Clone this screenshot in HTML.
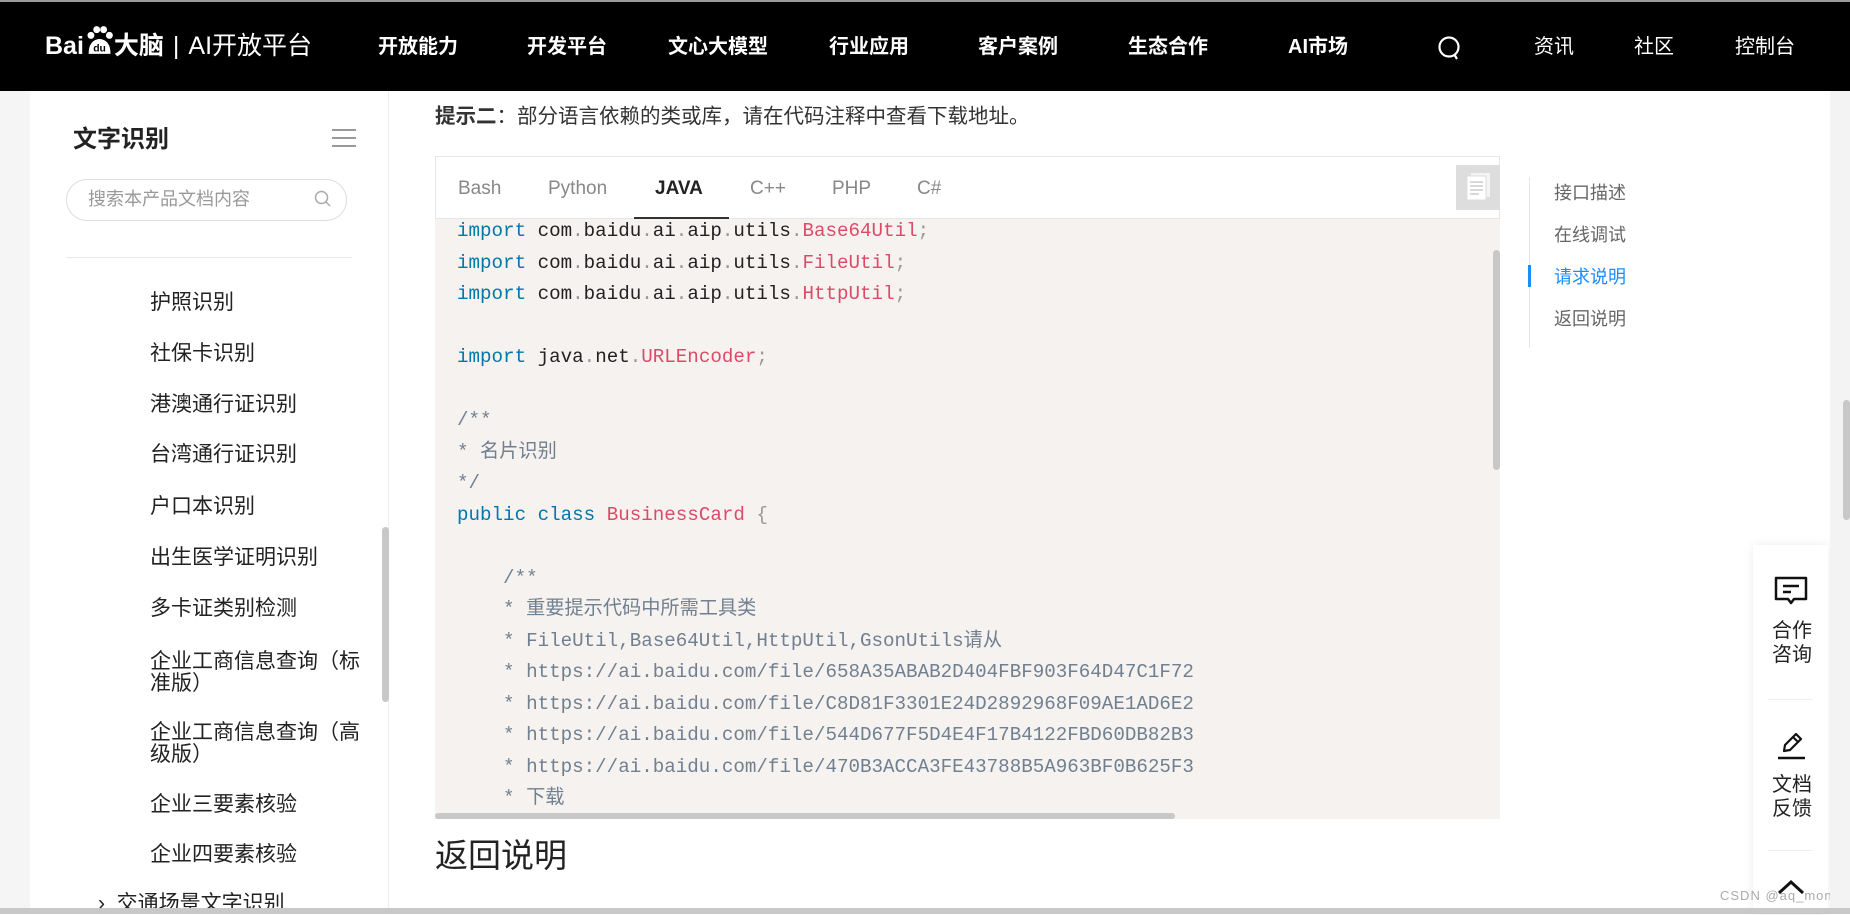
<!DOCTYPE html>
<html><head><meta charset="utf-8">
<style>
*{margin:0;padding:0;box-sizing:border-box}
body{width:1850px;height:914px;overflow:hidden;background:#fff;font-family:"Liberation Sans","Noto Sans CJK SC",sans-serif;position:relative;color:#333}
.abs{position:absolute}
#top{left:0;top:0;width:1850px;height:91px;background:#000;border-top:2px solid #9a9a9a}
.nav{position:absolute;top:32px;color:#fff;font-size:20px;font-weight:bold;white-space:nowrap;line-height:26px}
.navr{position:absolute;top:32px;color:#fff;font-size:20px;white-space:nowrap;line-height:26px}
#gut{left:0;top:91px;width:30px;height:823px;background:#f5f5f5}
#side{left:30px;top:91px;width:359px;height:823px;background:#fff;border-right:1px solid #eee}
.mi{position:absolute;left:150px;font-size:21px;color:#222;line-height:22px;width:215px;white-space:normal}
.code{font-family:"Liberation Mono","Noto Sans CJK SC",monospace;font-size:19.2px;line-height:31.5px;white-space:pre;color:#222}
.k{color:#07a}.c{color:#dd4a68}.p{color:#999}.cm{color:#708090}
.toc{position:absolute;left:1554px;font-size:18px;color:#666;line-height:22px}
.fw{position:absolute;left:1771px;font-size:20px;color:#222;line-height:24px;width:42px;text-align:center}
</style></head><body>
<div id="top" class="abs">
  <div class="abs" style="left:45px;top:29px;color:#fff;font-size:25px;font-weight:bold;white-space:nowrap;line-height:30px">Bai<span style="display:inline-block;width:30px;position:relative;height:24px;vertical-align:-3px"><svg width="30" height="30" viewBox="0 0 26 26" style="position:absolute;left:0;top:-8px"><circle cx="6" cy="9" r="3" fill="#fff"/><circle cx="11" cy="4" r="3" fill="#fff"/><circle cx="17" cy="4" r="3" fill="#fff"/><circle cx="22" cy="9" r="3" fill="#fff"/><path d="M4 25 Q4 13 13.5 12 Q23 13 23 25 Z" fill="#fff"/><text x="13.5" y="23" font-size="9" fill="#000" text-anchor="middle" font-family="Liberation Sans" font-weight="bold">du</text></svg></span>大脑<span style="font-weight:normal;margin:0 9px">|</span><span style="font-weight:normal">AI开放平台</span></div>
  <div class="nav" style="left:378px">开放能力</div>
  <div class="nav" style="left:527px">开发平台</div>
  <div class="nav" style="left:668px">文心大模型</div>
  <div class="nav" style="left:829px">行业应用</div>
  <div class="nav" style="left:978px">客户案例</div>
  <div class="nav" style="left:1128px">生态合作</div>
  <div class="nav" style="left:1288px">AI市场</div>
  <svg class="abs" style="left:1437px;top:33px" width="26" height="26" viewBox="0 0 26 26"><circle cx="12" cy="12" r="9.5" stroke="#fff" stroke-width="2.2" fill="none"/><path d="M17 19 L20 24" stroke="#fff" stroke-width="2.2"/></svg>
  <div class="navr" style="left:1534px">资讯</div>
  <div class="navr" style="left:1634px">社区</div>
  <div class="navr" style="left:1735px">控制台</div>
</div>
<div id="gut" class="abs"></div>
<div id="side" class="abs">
  <div class="abs" style="left:43px;top:28px;font-size:24px;font-weight:bold;color:#222">文字识别</div>
  <div class="abs" style="left:302px;top:38px;width:24px;height:2px;background:#999"></div>
  <div class="abs" style="left:302px;top:46px;width:24px;height:2px;background:#999"></div>
  <div class="abs" style="left:302px;top:54px;width:24px;height:2px;background:#999"></div>
  <div class="abs" style="left:36px;top:88px;width:281px;height:42px;border:1px solid #ddd;border-radius:21px"></div>
  <div class="abs" style="left:58px;top:94px;font-size:18px;color:#999">搜索本产品文档内容</div>
  <svg class="abs" style="left:283px;top:98px" width="20" height="20" viewBox="0 0 20 20"><circle cx="8.5" cy="8.5" r="6" stroke="#aaa" stroke-width="1.5" fill="none"/><path d="M13 13 L17 17" stroke="#aaa" stroke-width="1.5"/></svg>
  <div class="abs" style="left:36px;top:166px;width:286px;height:1px;background:#e8e8e8"></div>
  <div class="abs" style="left:352px;top:436px;width:7px;height:175px;background:#c8c8c8;border-radius:4px"></div>
</div>
<div class="mi" style="top:292px">护照识别</div>
<div class="mi" style="top:343px">社保卡识别</div>
<div class="mi" style="top:394px">港澳通行证识别</div>
<div class="mi" style="top:444px">台湾通行证识别</div>
<div class="mi" style="top:496px">户口本识别</div>
<div class="mi" style="top:547px">出生医学证明识别</div>
<div class="mi" style="top:598px">多卡证类别检测</div>
<div class="mi" style="top:651px">企业工商信息查询（标准版）</div>
<div class="mi" style="top:722px">企业工商信息查询（高级版）</div>
<div class="mi" style="top:794px">企业三要素核验</div>
<div class="mi" style="top:844px">企业四要素核验</div>
<div class="mi" style="left:98px;top:893px;width:300px">›&nbsp; 交通场景文字识别</div>

<div class="abs" style="left:435px;top:99px;font-size:20.5px;color:#333;white-space:nowrap"><b>提示二</b>：部分语言依赖的类或库，请在代码注释中查看下载地址。</div>

<div class="abs" style="left:435px;top:156px;width:1065px;height:663px;overflow:hidden">
  <div class="abs" style="left:0;top:0;width:1065px;height:63px;border:1px solid #e6e6e6;background:#fff"></div>
  <div class="abs" style="left:23px;top:22px;font-size:19px;color:#888">Bash</div>
  <div class="abs" style="left:113px;top:22px;font-size:19px;color:#888">Python</div>
  <div class="abs" style="left:220px;top:22px;font-size:19px;color:#222;font-weight:bold">JAVA</div>
  <div class="abs" style="left:315px;top:22px;font-size:19px;color:#888">C++</div>
  <div class="abs" style="left:397px;top:22px;font-size:19px;color:#888">PHP</div>
  <div class="abs" style="left:482px;top:22px;font-size:19px;color:#888">C#</div>
  <div class="abs" style="left:199px;top:61px;width:95px;height:2px;background:#333"></div>
  <div class="abs" style="left:1021px;top:9px;width:44px;height:45px;background:#ddd"></div>
  <svg class="abs" style="left:1031px;top:16px" width="26" height="30" viewBox="0 0 26 30"><rect x="5" y="1" width="19" height="24" fill="#f4f4f4"/><rect x="1" y="4" width="19" height="24" fill="#fff" stroke="#ddd"/><path d="M4 10h13M4 14h13M4 18h13M4 22h9" stroke="#ccc" stroke-width="1.5"/></svg>
  <div class="abs" style="left:0;top:63px;width:1065px;height:600px;background:#f5f2f0;overflow:hidden">
<div class="code abs" style="left:22px;top:-3px"><span class="k">import</span> com<span class="p">.</span>baidu<span class="p">.</span>ai<span class="p">.</span>aip<span class="p">.</span>utils<span class="p">.</span><span class="c">Base64Util</span><span class="p">;</span>
<span class="k">import</span> com<span class="p">.</span>baidu<span class="p">.</span>ai<span class="p">.</span>aip<span class="p">.</span>utils<span class="p">.</span><span class="c">FileUtil</span><span class="p">;</span>
<span class="k">import</span> com<span class="p">.</span>baidu<span class="p">.</span>ai<span class="p">.</span>aip<span class="p">.</span>utils<span class="p">.</span><span class="c">HttpUtil</span><span class="p">;</span>

<span class="k">import</span> java<span class="p">.</span>net<span class="p">.</span><span class="c">URLEncoder</span><span class="p">;</span>

<span class="cm">/**
* 名片识别
*/</span>
<span class="k">public</span> <span class="k">class</span> <span class="c">BusinessCard</span> <span class="p">{</span>

<span class="cm">    /**
    * 重要提示代码中所需工具类
    * FileUtil,Base64Util,HttpUtil,GsonUtils请从
    * https://ai.baidu.com/file/658A35ABAB2D404FBF903F64D47C1F72
    * https://ai.baidu.com/file/C8D81F3301E24D2892968F09AE1AD6E2
    * https://ai.baidu.com/file/544D677F5D4E4F17B4122FBD60DB82B3
    * https://ai.baidu.com/file/470B3ACCA3FE43788B5A963BF0B625F3
    * 下载</span></div>
    <div class="abs" style="left:1058px;top:31px;width:7px;height:220px;background:#c8c8c8;border-radius:4px"></div>
    <div class="abs" style="left:0;top:594px;width:740px;height:6px;background:#c8c8c8;border-radius:3px"></div>
  </div>
</div>

<div class="abs" style="left:435px;top:829px;font-size:33px;color:#222">返回说明</div>

<div class="abs" style="left:1529px;top:177px;width:1px;height:171px;background:#e6e6e6"></div>
<div class="abs" style="left:1528px;top:265px;width:3px;height:22px;background:#1a8cff"></div>
<div class="toc" style="top:182px">接口描述</div>
<div class="toc" style="top:224px">在线调试</div>
<div class="toc" style="top:266px;color:#1a8cff">请求说明</div>
<div class="toc" style="top:308px">返回说明</div>

<div class="abs" style="left:1753px;top:545px;width:75px;height:369px;background:#fff;box-shadow:0 0 10px rgba(0,0,0,.08)"></div>
<svg class="abs" style="left:1773px;top:575px" width="36" height="32" viewBox="0 0 36 32"><path d="M3 3h30v21H21l-3 4-3-4H3z" fill="none" stroke="#111" stroke-width="2.5" stroke-linejoin="round"/><path d="M10 11h16M10 17h8" stroke="#111" stroke-width="2.5"/></svg>
<div class="fw" style="top:619px">合作</div>
<div class="fw" style="top:643px">咨询</div>
<div class="abs" style="left:1768px;top:699px;width:45px;height:1px;background:#eee"></div>
<svg class="abs" style="left:1775px;top:730px" width="32" height="32" viewBox="0 0 32 32"><path d="M9 21 L10 15 L21 4 L26 9 L15 20 Z" fill="none" stroke="#111" stroke-width="2.2" stroke-linejoin="round"/><path d="M18 7 L23 12" stroke="#111" stroke-width="2"/><path d="M3 28h27" stroke="#111" stroke-width="2.5"/></svg>
<div class="fw" style="top:773px">文档</div>
<div class="fw" style="top:797px">反馈</div>
<div class="abs" style="left:1768px;top:850px;width:45px;height:1px;background:#eee"></div>
<svg class="abs" style="left:1776px;top:878px" width="30" height="18" viewBox="0 0 30 18"><path d="M3 15 L15 4 L27 15" fill="none" stroke="#111" stroke-width="3"/></svg>
<div class="abs" style="left:1720px;top:888px;font-size:13px;color:#aaa;letter-spacing:1px">CSDN @aq_money</div>

<div class="abs" style="left:1830px;top:91px;width:20px;height:817px;background:#f3f3f3"></div>
<div class="abs" style="left:1843px;top:400px;width:7px;height:120px;background:#c8c8c8;border-radius:4px"></div>
<div class="abs" style="left:0;top:908px;width:1850px;height:6px;background:#c8c8c8"></div>
</body></html>
